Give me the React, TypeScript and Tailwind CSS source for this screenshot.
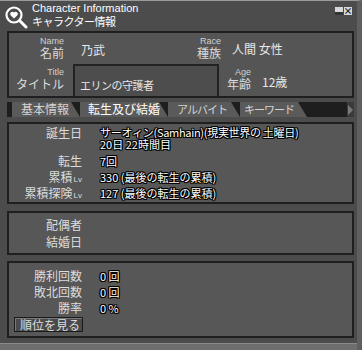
import React from "react";

const jp = { fontFamily: '"Noto Sans CJK JP", "DejaVu Sans", sans-serif' };
const lat = { fontFamily: '"Liberation Sans", Arial, sans-serif' };
const outline =
  "[text-shadow:1px_0_0_#000,-1px_0_0_#000,0_1px_0_#000,0_-1px_0_#000,1px_1px_0_#000,-1px_-1px_0_#000,1px_-1px_0_#000,-1px_1px_0_#000]";

function Icon() {
  return (
    <svg width="26" height="26" viewBox="0 0 26 26">
      <circle cx="12" cy="12" r="7.5" fill="none" stroke="#fff" strokeWidth="2.2" />
      <path d="M17.5 17.5 L24 24" stroke="#fff" strokeWidth="3" strokeLinecap="round" />
      <path
        d="M12 15.5 L8.6 12.2 A2 2 0 0 1 12 9.6 A2 2 0 0 1 15.4 12.2 Z"
        fill="#fff"
      />
    </svg>
  );
}

function Tab({ w, label, active, pl, narrow }: { w: string; label: string; active?: boolean; pl: string; narrow?: boolean }) {
  return (
    <div
      className={`${w} h-full ${pl} bg-[#5a5a5a] [clip-path:polygon(0_0,calc(100%-9px)_0,100%_100%,0_100%)] leading-[14px] whitespace-nowrap ${
        narrow ? "text-[11px] tracking-[-1px]" : "text-[12px]"
      } ${active ? "text-white" : "text-[#d4d4d4]"}`}
      style={jp}
    >
      {label}
    </div>
  );
}

function Label({ children }: { children: React.ReactNode }) {
  return <span className="text-[#dcdcdc]">{children}</span>;
}

function Lv() {
  return <span className="text-[8px] ml-[1px]" style={lat}>Lv</span>;
}

function Small({ children }: { children: React.ReactNode }) {
  return (
    <span className="text-[9px] leading-[9px] text-[#d0d0d0]" style={lat}>
      {children}
    </span>
  );
}

export default function App() {
  return (
    <div
      className="w-[362px] h-[350px] bg-[#4c4c4c] flex flex-col overflow-hidden border-t border-[#9a9a9a] border-r-[5px] border-r-[#5f5f5f] relative"
      style={jp}
    >
      {/* Title bar */}
      <div className="h-[30px] flex items-start relative">
        <div className="ml-[2px] mt-[2px]">
          <Icon />
        </div>
        <div className="ml-[4px] flex flex-col">
          <span className="text-white text-[11px] leading-[12px] mt-[1px]" style={lat}>
            Character Information
          </span>
          <span className="text-white text-[11px] leading-[14px] tracking-[-0.5px]">キャラクター情報</span>
        </div>
        <div className="absolute right-[5px] top-[6px] flex gap-[1px]">
          <div className="w-[8px] h-[8px] bg-[#d8d8d8] flex items-end">
            <div className="w-full h-[3px] bg-[#333]" />
          </div>
          <div className="w-[8px] h-[8px] bg-[#d8d8d8] flex items-center justify-center text-[#222] text-[9px] leading-[8px] font-bold">
            ×
          </div>
        </div>
      </div>

      {/* Basic info panel */}
      <div className="ml-[7px] mr-[3px] h-[67px] border-2 border-[#1f1f1f] bg-[#555555] flex flex-col">
        <div className="h-[31px] flex">
          <div className="w-[55px] flex flex-col items-end pt-[4px]">
            <Small>Name</Small>
            <span className="text-[12px] leading-[14px] text-[#dcdcdc]">名前</span>
          </div>
          <div className="w-[115px] ml-[17px] pt-[10px] text-[12px] leading-[14px] text-[#e8e8e8]">乃武</div>
          <div className="w-[25px] flex flex-col items-end pt-[4px]">
            <Small>Race</Small>
            <span className="text-[12px] leading-[14px] text-[#dcdcdc] whitespace-nowrap">種族</span>
          </div>
          <div className="ml-[11px] pt-[9px] text-[12px] leading-[14px] text-[#e8e8e8]">人間 女性</div>
        </div>
        <div className="flex-1 flex">
          <div className="w-[55px] flex flex-col items-end pt-[4px]">
            <Small>Title</Small>
            <span className="text-[12px] leading-[14px] text-[#dcdcdc] whitespace-nowrap">タイトル</span>
          </div>
          <div className="ml-[9px] w-[146px] h-full border-2 border-b-0 border-[#222] bg-[#4d4d4d] pl-[5px] pt-[12px] text-[11px] leading-[14px] tracking-[-0.5px] text-[#e8e8e8]">
            エリンの守護者
          </div>
          <div className="w-[32px] flex flex-col items-end pt-[4px]">
            <Small>Age</Small>
            <span className="text-[12px] leading-[14px] text-[#dcdcdc] whitespace-nowrap">年齢</span>
          </div>
          <div className="ml-[11px] pt-[11px] text-[12px] leading-[14px] text-[#e8e8e8]">12歳</div>
        </div>
      </div>

      {/* Tabs */}
      <div className="ml-[7px] mr-[3px] mt-[4px] h-[15px] bg-[#1e1e1e] flex relative">
        <div className="w-[5px]" />
        <Tab w="w-[68px]" pl="pl-[9px]" label="基本情報" />
        <Tab w="w-[88px]" pl="pl-[8px]" label="転生及び結婚" active />
        <Tab w="w-[72px]" pl="pl-[9px]" label="アルバイト" narrow />
        <Tab w="w-[67px]" pl="pl-[4px]" label="キーワード" narrow />
        <div className="absolute right-0 top-0 h-full w-[7px] bg-[#3a3a3a] flex items-center justify-center">
          <div className="w-0 h-0 border-y-[5px] border-y-transparent border-l-[5px] border-l-[#7a7a7a]" />
        </div>
      </div>

      {/* Reincarnation panel */}
      <div className="ml-[7px] mr-[3px] mt-[5px] h-[82px] border-2 border-[#1f1f1f] bg-[#575757] pt-[2px] text-[12px]">
        <div className="flex h-[27px]">
          <div className="w-[73px] text-right leading-[14px]"><Label>誕生日</Label></div>
          <div className={`ml-[18px] text-white text-[11px] leading-[12px] whitespace-nowrap ${outline}`}>
            <div className="tracking-[-0.3px]">サーオィン(Samhain)(現実世界の 土曜日)</div>
            <div>20日 22時間目</div>
          </div>
        </div>
        {[
          [<>転生</>, "7回"],
          [<>累積<Lv /></>, "330 (最後の転生の累積)"],
          [<>累積探険<Lv /></>, "127 (最後の転生の累積)"],
        ].map(([l, v], i) => (
          <div key={i} className="flex h-[16px] leading-[16px]">
            <div className="w-[73px] text-right whitespace-nowrap"><Label>{l}</Label></div>
            <div className={`ml-[18px] text-white text-[11px] whitespace-nowrap ${outline}`}>{v}</div>
          </div>
        ))}
      </div>

      {/* Marriage panel */}
      <div className="ml-[7px] mr-[3px] mt-[7px] h-[44px] border-2 border-[#1f1f1f] bg-[#575757] pt-[3px] text-[12px]">
        <div className="w-[73px] text-right leading-[17px]"><Label>配偶者</Label></div>
        <div className="w-[73px] text-right leading-[17px]"><Label>結婚日</Label></div>
      </div>

      {/* Battle panel */}
      <div className="ml-[7px] mr-[3px] mt-[6px] h-[77px] border-2 border-[#1f1f1f] bg-[#575757] pt-[5px] text-[12px]">
        {[
          ["勝利回数", "0 回"],
          ["敗北回数", "0 回"],
          ["勝率", "0 %"],
        ].map(([l, v], i) => (
          <div key={i} className="flex h-[16px] leading-[16px]">
            <div className="w-[73px] text-right whitespace-nowrap"><Label>{l}</Label></div>
            <div className={`ml-[18px] text-white text-[11px] whitespace-nowrap ${outline}`}>{v}</div>
          </div>
        ))}
        <div className="ml-[5px] mt-[1px] w-[69px] h-[15px] border border-[#1a1a1a] bg-[#4a4a4a] shadow-[inset_1px_1px_0_#7a7a7a] flex items-center pl-[5px] text-[12px] leading-[13px] text-[#dcdcdc]">
          順位を見る
        </div>
      </div>

      <div className="flex-1" />
      <div className="h-[7px] bg-[#6e6e6e] border-t border-[#8a8a8a]" />
    </div>
  );
}
